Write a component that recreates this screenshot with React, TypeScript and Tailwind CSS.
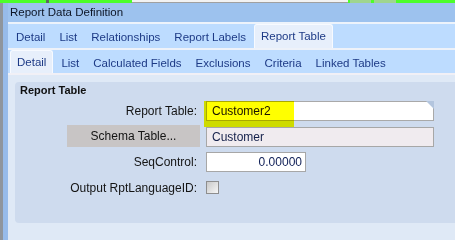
const topTabs = ['Detail', 'List', 'Relationships', 'Report Labels', 'Report Table'];
const subTabs = ['Detail', 'List', 'Calculated Fields', 'Exclusions', 'Criteria', 'Linked Tables'];

function TabRow({ tabs, active, height }: { tabs: string[]; active: string; height: string }) {
  return (
    <div className={`flex items-end gap-[2px] bg-[#bddcff] pl-[2px] text-[11.5px] ${height}`}>
      {tabs.map((t) =>
        t === active ? (
          <div
            key={t}
            className="h-full mt-[1px] flex items-center px-[6px] pt-[1px] bg-[#e7effb] border border-b-0 border-[#f7faff] rounded-t-[3px] text-[#1d3a86]"
          >
            {t}
          </div>
        ) : (
          <div key={t} className="h-full flex items-center px-[6px] pt-[4px] text-[#1d3a86]">
            {t}
          </div>
        )
      )}
    </div>
  );
}

export default function App() {
  return (
    <div className="w-[455px] h-[240px] overflow-hidden flex flex-col bg-[#dfe9f6] font-['Liberation_Sans',Arial,sans-serif] text-[11px]">
      {/* green strip of the window behind */}
      <div className="h-[3px] flex bg-[#4cfe2a]">
        <div className="w-[46px]" />
        <div className="w-[3px] bg-[#5a6a5a]" />
        <div className="w-[83px]" />
        <div className="w-[216px] bg-[#f2f2f2] border-b border-[#a0a0a0]" />
        <div className="w-[2px]" />
        <div className="w-[21px] bg-[#9fd58f]" />
        <div className="w-[3px]" />
        <div className="w-[22px] bg-[#9fd58f]" />
      </div>

      <div className="flex-1 flex">
        <div className="w-[3px] bg-[#8f959d]" />
        <div className="w-[5px] bg-[#97bbea]" />

        <div className="flex-1 flex flex-col">
          <div className="h-[19px] flex items-center pl-[2px] bg-[#9dc2ee] text-[11.5px] text-[#0c1424]">
            Report Data Definition
          </div>
          <div className="h-[2px] bg-[#edf3fb]" />
          <TabRow tabs={topTabs} active="Report Table" height="h-[24px]" />
          <div className="h-[2px] bg-[#eef2f9]" />
          <TabRow tabs={subTabs} active="Detail" height="h-[23px]" />
          <div className="h-[2px] bg-[#f1f0f6]" />

          <div className="flex-1 pl-[7px] pt-[7px]">
            <div className="h-[141px] bg-[#cedbee] rounded-l-[4px] pl-[5px] text-[12px] text-[#141414]">
              <div className="h-[16px] flex items-center font-bold text-[11px] text-[#101010]">Report Table</div>

              <div className="grid grid-cols-[180px_auto] gap-x-[6px] items-center">
                <div className="mt-[3px] h-[20px] flex items-center justify-end pr-[3px]">Report Table:</div>
                <div className="mt-[3px] relative w-[228px] h-[20px] flex items-center pl-[5px] bg-white border border-[#a9a9a9] text-[#1a1208]">
                  Customer2
                  <svg className="absolute -top-px -right-px" width="8" height="8" viewBox="0 0 8 8">
                    <polygon points="0,0 8,0 8,8" fill="#b3c5de" />
                  </svg>
                  <div className="absolute left-[-3px] top-[-1px] w-[90px] h-[26px] bg-[#ffff00] mix-blend-multiply" />
                </div>

                <div className="mt-[4px] h-[22px] justify-self-end w-[133px] flex items-center justify-center bg-[#c8c5c5]">
                  Schema Table...
                </div>
                <div className="mt-[6px] w-[228px] h-[20px] flex items-center pl-[5px] bg-[#f0ebef] border border-[#a7a7a7] text-[#14204a]">
                  Customer
                </div>

                <div className="mt-[5px] h-[20px] flex items-center justify-end pr-[3px]">SeqControl:</div>
                <div className="mt-[5px] w-[100px] h-[20px] flex items-center justify-end pr-[3px] bg-white border border-[#a7a7a7] text-[#0d1d55]">
                  0.00000
                </div>

                <div className="mt-[9px] h-[13px] flex items-center justify-end pr-[3px]">Output RptLanguageID:</div>
                <div className="mt-[9px] w-[13px] h-[13px] border border-[#8e8e8e] bg-gradient-to-br from-[#c9c9c9] to-[#f7f7f7]" />
              </div>
            </div>
          </div>
        </div>
      </div>
    </div>
  );
}
